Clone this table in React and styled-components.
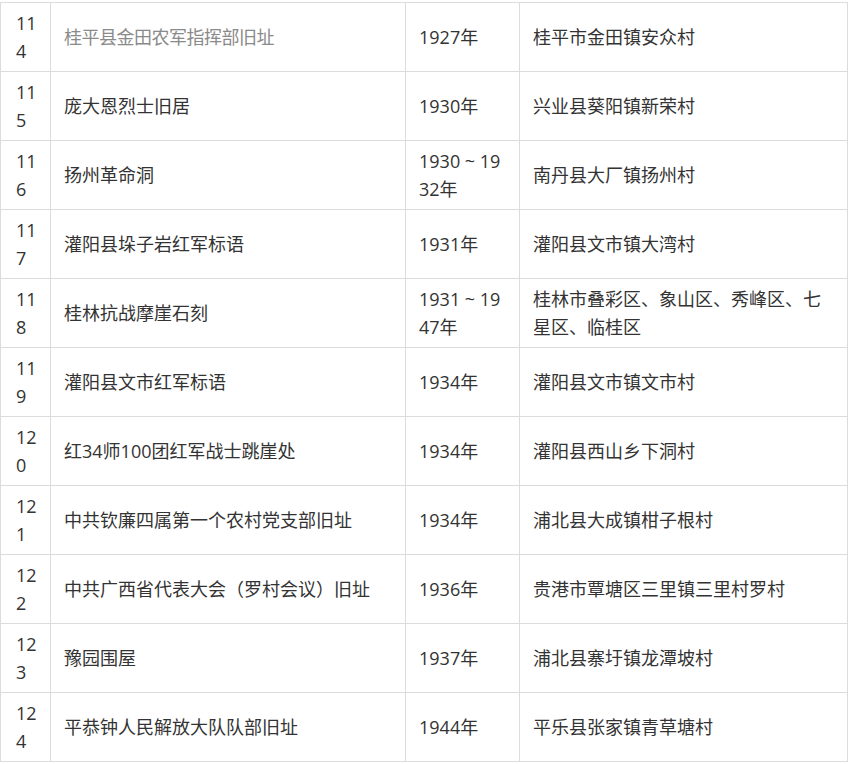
import React from 'react';
import styled, { createGlobalStyle } from 'styled-components';

const GlobalStyle = createGlobalStyle`
  body {
    margin: 0;
    background: #ffffff;
    font-family: "Open Sans", "Noto Sans CJK SC", sans-serif;
  }
`;

const Page = styled.div`
  padding-top: 2px;
  width: 849px;
`;

const Table = styled.table`
  width: 847px;
  border-collapse: collapse;
  table-layout: fixed;
  color: #333333;
  font-size: 18px;
  line-height: 28px;
`;

const Col = styled.col`
  width: ${(p) => p.$w}px;
`;

const Cell = styled.td`
  border: 1px solid #dcdcdc;
  padding: 6px 13px;
  height: 56px;
  vertical-align: middle;
  word-break: break-all;
  color: ${(p) => (p.$faded ? '#8a8a8a' : '#333333')};
  letter-spacing: ${(p) => (p.$faded ? '-0.5px' : '0')};
`;

const NumCell = styled(Cell)`
  padding-left: 15px;
  padding-right: 9px;
`;

const rows = [
  ['114', '桂平县金田农军指挥部旧址', '1927年', '桂平市金田镇安众村', true],
  ['115', '庞大恩烈士旧居', '1930年', '兴业县葵阳镇新荣村'],
  ['116', '扬州革命洞', '1930 ~ 1932年', '南丹县大厂镇扬州村'],
  ['117', '灌阳县垛子岩红军标语', '1931年', '灌阳县文市镇大湾村'],
  ['118', '桂林抗战摩崖石刻', '1931 ~ 1947年', '桂林市叠彩区、象山区、秀峰区、七星区、临桂区'],
  ['119', '灌阳县文市红军标语', '1934年', '灌阳县文市镇文市村'],
  ['120', '红34师100团红军战士跳崖处', '1934年', '灌阳县西山乡下洞村'],
  ['121', '中共钦廉四属第一个农村党支部旧址', '1934年', '浦北县大成镇柑子根村'],
  ['122', '中共广西省代表大会（罗村会议）旧址', '1936年', '贵港市覃塘区三里镇三里村罗村'],
  ['123', '豫园围屋', '1937年', '浦北县寨圩镇龙潭坡村'],
  ['124', '平恭钟人民解放大队队部旧址', '1944年', '平乐县张家镇青草塘村'],
];

export default function App() {
  return (
    <Page>
      <GlobalStyle />
      <Table>
        <colgroup>
          <Col $w={50} />
          <Col $w={355} />
          <Col $w={114} />
          <Col $w={328} />
        </colgroup>
        <tbody>
          {rows.map(([no, name, year, place, faded]) => (
            <tr key={no}>
              <NumCell>{no}</NumCell>
              <Cell $faded={faded}>{name}</Cell>
              <Cell>{year}</Cell>
              <Cell>{place}</Cell>
            </tr>
          ))}
        </tbody>
      </Table>
    </Page>
  );
}
